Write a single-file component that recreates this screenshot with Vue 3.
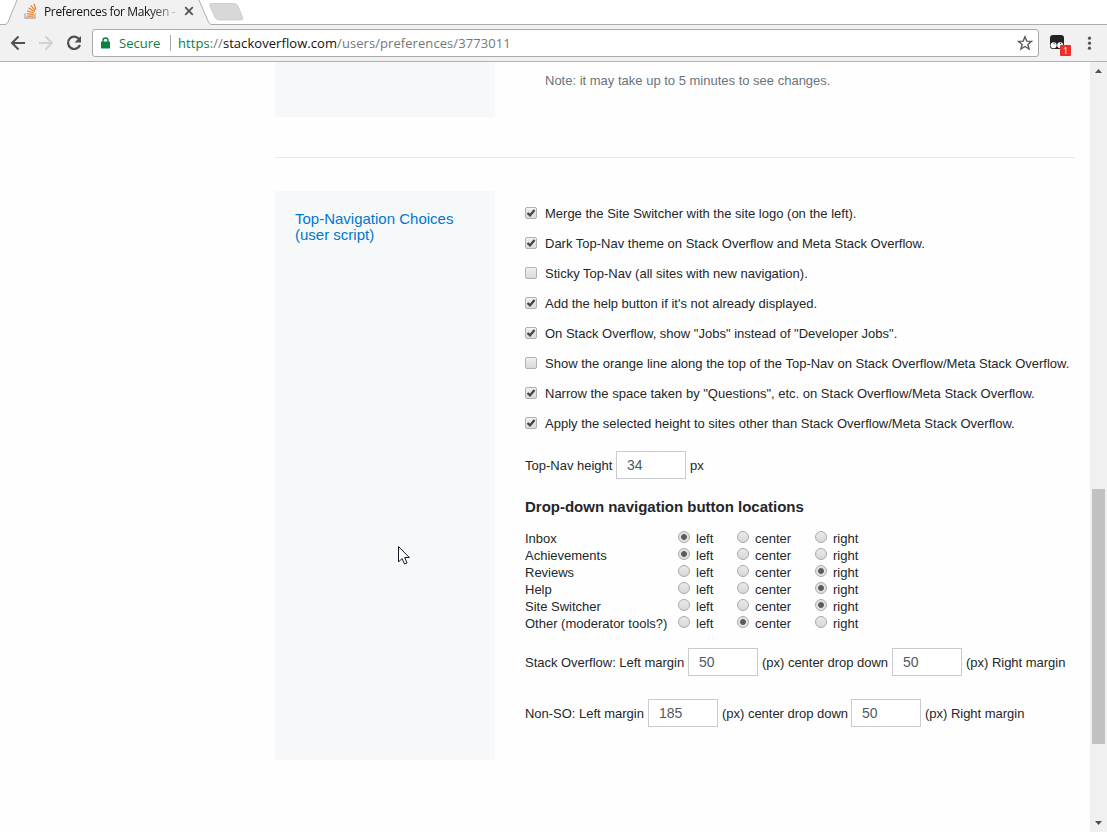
<script setup>
const checks = [
  ['Merge the Site Switcher with the site logo (on the left).', true],
  ['Dark Top-Nav theme on Stack Overflow and Meta Stack Overflow.', true],
  ['Sticky Top-Nav (all sites with new navigation).', false],
  ["Add the help button if it's not already displayed.", true],
  ['On Stack Overflow, show "Jobs" instead of "Developer Jobs".', true],
  ['Show the orange line along the top of the Top-Nav on Stack Overflow/Meta Stack Overflow.', false],
  ['Narrow the space taken by "Questions", etc. on Stack Overflow/Meta Stack Overflow.', true],
  ['Apply the selected height to sites other than Stack Overflow/Meta Stack Overflow.', true],
]
const positions = ['left', 'center', 'right']
const buttons = [
  ['Inbox', 'left'],
  ['Achievements', 'left'],
  ['Reviews', 'right'],
  ['Help', 'right'],
  ['Site Switcher', 'right'],
  ['Other (moderator tools?)', 'center'],
]
</script>

<template>
  <div class="window">
    <header class="chrome">
      <div class="tabs">
        <svg class="tab-shape" width="250" height="25" viewBox="0 0 250 25">
          <path d="M0 24.5H4C7 24.5 7.500 23 8.500 21L17 0H199L208 21C209 23.500 210 24.500 212 24.500H250V25H0Z" fill="#f1f1f1" />
          <path d="M0 24.500H4C7 24.500 7.500 23 8.500 21L17 0M199 0L208 21C209 23.500 210 24.500 212 24.500H250" fill="none" stroke="#adadad" />
          <path d="M211 3.500H234Q237 3.500 238 6L242.500 17Q243.500 20 241 20H219Q216 20 215 17L210 6Q209 3.500 211 3.500Z" fill="#d8d8d8" stroke="#c8c8c8" stroke-width=".8" />
        </svg>
        <svg class="favicon" width="13" height="16" viewBox="0 0 13 16">
          <path d="M1 10.500V15H11V10.500" fill="none" stroke="#a8abae" stroke-width="1.300" />
          <path d="M2.800 13H9.500M2.800 10.600L9.600 11.600M3.200 7.900L9.900 10M4.600 4.900L10.500 8.700M6.700 2.300L11.200 7.500M10 .7L12 6.500" fill="none" stroke="#f48024" stroke-width="1.250" />
        </svg>
        <span class="tab-title">Preferences for Makyen -</span>
        <svg class="tab-close" width="10" height="10" viewBox="0 0 10 10"><path d="M1.200 1.200L8.800 8.800M8.800 1.200L1.200 8.800" stroke="#505050" stroke-width="1.700" /></svg>
      </div>
      <div class="toolbar">
        <svg class="nav" width="92" height="36" viewBox="0 25 92 36">
          <g fill="none" stroke-width="2">
            <path d="M25 43H12M18.500 36.500L12 43L18.500 49.500" stroke="#505050" />
            <path d="M39 43H52M45.500 36.500L52 43L45.500 49.500" stroke="#d2d2d2" />
            <path d="M79.300 39.200A6.200 6.200 0 1 0 80 45" stroke="#505050" stroke-width="2.200" />
          </g>
          <path d="M81 36V42.500H74.500Z" fill="#505050" />
        </svg>
        <div class="address">
          <svg class="lock" width="9" height="12" viewBox="0 0 9 12"><path d="M2 5V3.200Q2 1 4.500 1T7 3.200V5" fill="none" stroke="#0b8043" stroke-width="1.400" /><rect y="4.500" width="9" height="7" rx=".7" fill="#0b8043" /></svg>
          <span class="secure">Secure</span>
          <i class="divider"></i>
          <span class="url"><b>https</b>://<em>stackoverflow.com</em>/users/preferences/3773011</span>
          <svg class="star" width="16" height="16" viewBox="0 0 16 16"><path d="M8 1.700L9.800 6.100L14.500 6.400L10.900 9.400L12.100 14L8 11.500L3.900 14L5.100 9.400L1.500 6.400L6.200 6.100Z" fill="none" stroke="#5a5a5a" stroke-width="1.400" /></svg>
        </div>
        <div class="extension">
          <svg width="16" height="15" viewBox="0 0 16 15"><rect x="1" y="0" width="14" height="14" rx="3" fill="#222" /><circle cx="4.600" cy="10.300" r="3" fill="#fff" /><circle cx="11.200" cy="10.300" r="3" fill="#fff" /><path d="M4.500 8L5.800 9.300M11 8L12.300 9.300" stroke="#444" /></svg>
          <span class="badge">1</span>
        </div>
        <svg class="menu" width="5" height="15" viewBox="0 0 5 15" fill="#555"><circle cx="2.500" cy="2.200" r="1.600" /><circle cx="2.500" cy="7.200" r="1.600" /><circle cx="2.500" cy="12.200" r="1.600" /></svg>
      </div>
    </header>

    <div class="viewport">
      <main class="page">
        <section class="previous">
          <div class="side"></div>
          <p class="note">Note: it may take up to 5 minutes to see changes.</p>
        </section>
        <section class="preferences">
          <div class="side"><h2>Top-Navigation Choices<br />(user script)</h2></div>
          <div class="options">
            <label v-for="[text, on] in checks" :key="text" class="check-row">
              <span class="checkbox"><svg v-if="on" width="10" height="10" viewBox="0 0 10 10"><path d="M1.500 5L4 7.400L8.500 1.900" fill="none" stroke="#444" stroke-width="2.300" /></svg></span>
              <span>{{ text }}</span>
            </label>
            <div class="field-row height-row"><span class="w-height">Top-Nav height</span><span class="input">34</span><span>px</span></div>
            <h3>Drop-down navigation button locations</h3>
            <div class="locations">
              <template v-for="[name, selected] in buttons" :key="name">
                <span class="name">{{ name }}</span>
                <label v-for="position in positions" :key="position" class="radio-label">
                  <span class="radio" :class="{ selected: position === selected }"></span>{{ position }}
                </label>
              </template>
            </div>
            <div class="field-row so-row"><span class="w-so">Stack Overflow: Left margin</span><span class="input">50</span><span class="w-center">(px) center drop down</span><span class="input">50</span><span>(px) Right margin</span></div>
            <div class="field-row other-row"><span class="w-non">Non-SO: Left margin</span><span class="input">185</span><span class="w-center narrow">(px) center drop down</span><span class="input">50</span><span>(px) Right margin</span></div>
          </div>
        </section>
      </main>
      <aside class="scrollbar">
        <svg width="17" height="17" viewBox="0 0 17 17"><path d="M5 11L8.500 7L12 11Z" fill="#505050" /></svg>
        <div class="track"><div class="thumb"></div></div>
        <svg width="17" height="17" viewBox="0 0 17 17"><path d="M5 6L8.500 10L12 6Z" fill="#505050" /></svg>
      </aside>
    </div>
    <svg class="cursor" width="14" height="21" viewBox="0 0 14 21"><path d="M1.500 1.500V17L5 13.500L7.500 19L10 18L7.700 12.500H12.300Z" fill="#fff" stroke="#171725" stroke-width="1" /></svg>
  </div>
</template>

<style>
body { margin: 0; overflow: hidden; }
</style>
<style scoped>
* { box-sizing: border-box; }
.window { position: relative; width: 1107px; height: 832px; overflow: hidden; display: flex; flex-direction: column; background: #fefefe; color: #242729; font: 13px/17px "Liberation Sans", Arial, sans-serif; }
svg { display: block; flex: none; }
.chrome { flex: none; height: 62px; background: #f1f1f1; border-bottom: 1px solid #b2b2b2; font-family: "Open Sans", "Noto Sans", sans-serif; }
.tabs { position: relative; height: 25px; display: flex; align-items: flex-start; background: #fff; border-bottom: 1px solid #adadad; }
.tab-shape { position: absolute; left: 0; top: 0; }
.favicon { position: relative; margin: 3px 0 0 24px; }
.tab-title { position: relative; width: 137px; margin: 3px 0 0 7px; font-size: 12px; line-height: 17px; letter-spacing: -.37px; white-space: nowrap; color: #111; background: linear-gradient(90deg, #111 0 105px, #d0d0d0 134px); -webkit-background-clip: text; background-clip: text; -webkit-text-fill-color: transparent; }
.tab-close { position: relative; margin: 6px 0 0 3px; }
.toolbar { height: 36px; display: flex; align-items: center; }
.address { width: 947px; height: 28px; display: flex; align-items: center; background: #fff; border: 1px solid #aaa; border-radius: 3px; padding: 0 5px 0 8px; font-size: 13px; }
.secure { width: 43px; margin-left: 9px; color: #0b8043; white-space: nowrap; }
.divider { width: 1px; height: 16px; margin: 0 7px 0 8px; background: #aaa; }
.url { color: #777; white-space: nowrap; flex: 1; letter-spacing: .065px; }
.url b { font-weight: 400; color: #0b8043; }
.url em { font-style: normal; color: #111; }
.extension { position: relative; width: 24px; height: 22px; margin-left: 10px; padding-top: 3px; }
.badge { position: absolute; left: 11px; top: 13px; width: 11px; height: 11px; background: #ee2d2d; border-radius: 1px; color: white; font-size: 9px; line-height: 11px; text-align: center; }
.menu { margin-left: 14px; }
.viewport { flex: 1; min-height: 0; display: flex; }
.page { flex: 1; padding-left: 275px; }
.previous { height: 96px; width: 800px; display: flex; border-bottom: 1px solid #e8eaec; }
.side { width: 220px; flex: none; background: #f7f8fa; }
.previous .side { height: 55px; }
.note { margin: 10px 0 0 50px; color: #6a737c; white-space: nowrap; }
.preferences { height: 569px; margin-top: 33px; display: flex; }
h2 { margin: 20px 0 0 20px; color: #0077cc; font-weight: 400; font-size: 15px; line-height: 16px; }
.options { width: 582px; flex: none; padding: 13px 0 0 30px; white-space: nowrap; }
.check-row { height: 30px; display: flex; gap: 8px; padding-top: 1px; }
.checkbox { width: 12px; height: 12px; margin-top: 2px; border: 1px solid #b0b0b0; border-radius: 2px; background: linear-gradient(#eee, #dadada); display: flex; align-items: center; justify-content: center; box-shadow: inset 0 1px #f5f5f5; }
.field-row { display: flex; align-items: center; height: 28px; gap: 4px; }
.height-row { margin-top: 7px; }
.input { width: 70px; height: 28px; flex: none; border: 1px solid #c8ccd0; background: #fff; color: #535a60; font-size: 14px; line-height: 26px; padding-left: 10px; }
.w-height { width: 87px; }
.w-so { width: 159px; }
.w-center { width: 126px; }
.w-center.narrow { width: 125px; }
.w-non { width: 119px; }
.so-row, .other-row { letter-spacing: -.02px; }
h3 { margin: 19px 0 14px; font-size: 15px; line-height: 18px; letter-spacing: -.01px; }
.locations { display: grid; grid-template-columns: 153px 59px 78px 60px; grid-auto-rows: 17px; }
.radio-label { display: flex; gap: 6px; }
.radio { width: 12px; height: 12px; flex: none; margin-top: 1px; border: 1px solid #aaa; border-radius: 50%; background: linear-gradient(#e9e9e9, #d8d8d8); }
.radio.selected { background: radial-gradient(circle, #5c5c5c 0 2.500px, #e2e2e2 3.300px); }
.so-row { margin-top: 16px; }
.other-row { margin-top: 23px; }
.scrollbar { width: 17px; flex: none; background: #f0f0f0; display: flex; flex-direction: column; }
.track { flex: 1; padding: 410px 2px 0; }
.thumb { height: 255px; background: #c1c1c1; }
.cursor { position: absolute; left: 397px; top: 545px; }
</style>
